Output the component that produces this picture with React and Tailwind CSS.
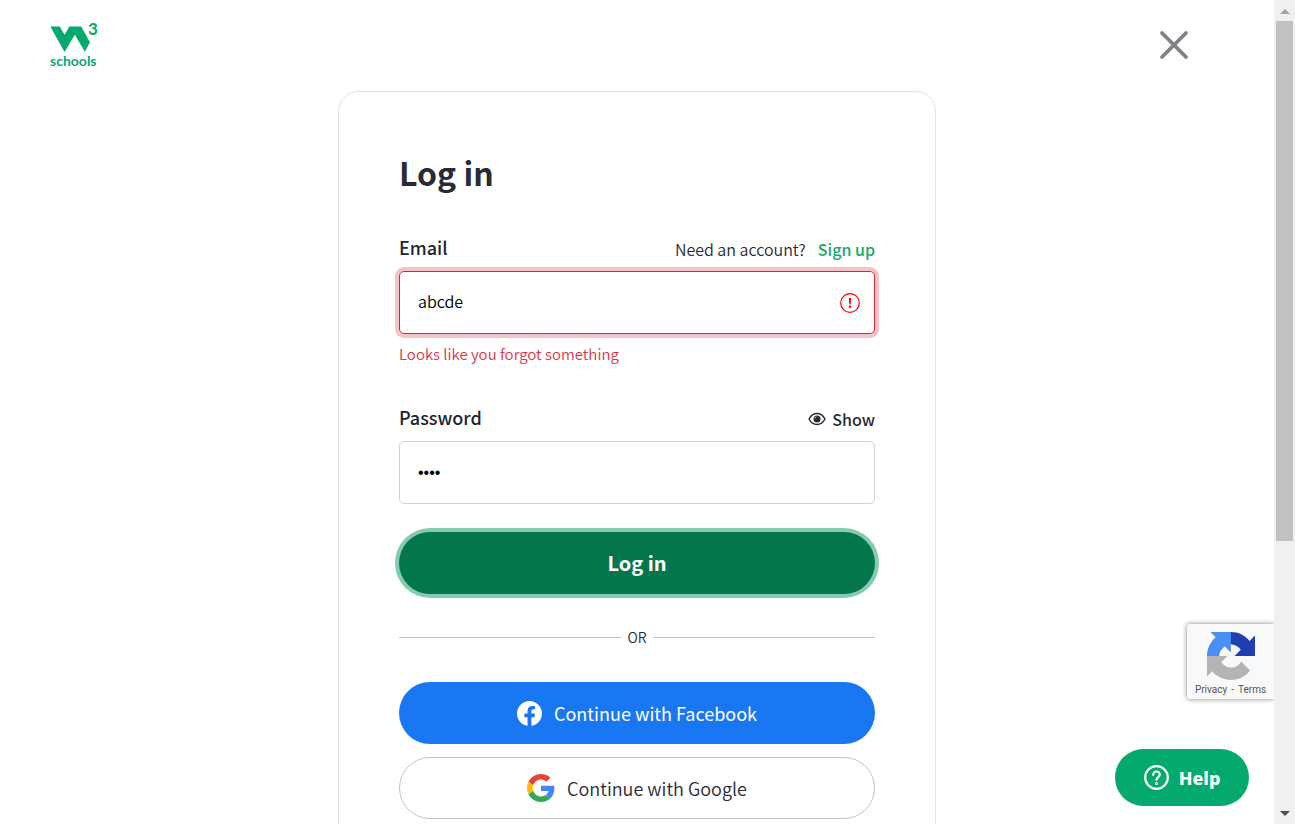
import { useState } from "react";

function Logo() {
  return (
    <a href="#home" aria-label="W3Schools home" className="block text-[#04aa6d]">
      <svg width="56" height="58" viewBox="0 -8 56 58" fill="currentColor" aria-hidden="true">
        <path d="M0.3 4.5H9.8L14.6 12.8L19.4 4.5H31.2L40 20.2L34.9 29.8L24.8 12.8L14.6 30Z" />
        <text x="38" y="13" fontFamily="Lato, sans-serif" fontWeight="700" fontSize="17">3</text>
        <text x="0" y="44" fontFamily="Lato, sans-serif" fontWeight="700" fontSize="14">schools</text>
      </svg>
    </a>
  );
}

function FieldHead({ id, label, children }) {
  return (
    <div className="mb-[9px] flex items-start justify-between">
      <label htmlFor={id} className="text-lg leading-[22px] font-medium text-[#21252f]">{label}</label>
      {children}
    </div>
  );
}

function EyeIcon() {
  return (
    <svg width="18" height="14" viewBox="0 0 18 14" fill="none" aria-hidden="true">
      <path d="M1 7C3 3.2 5.7 1.5 9 1.5S15 3.2 17 7C15 10.8 12.3 12.5 9 12.5S3 10.8 1 7Z" stroke="currentColor" strokeWidth="1.4" />
      <circle cx="9" cy="7" r="3.5" fill="currentColor" />
      <path d="M6.8 6.4A2 2 0 0 1 8.4 4.8" stroke="#fff" strokeWidth="0.8" />
    </svg>
  );
}

function FacebookIcon() {
  return (
    <svg width="25" height="25" viewBox="0 0 24 24" fill="#fff" aria-hidden="true">
      <path d="M24 12.073c0-6.627-5.373-12-12-12s-12 5.373-12 12c0 5.99 4.388 10.954 10.125 11.854v-8.385H7.078v-3.47h3.047V9.43c0-3.007 1.792-4.669 4.533-4.669 1.312 0 2.686.235 2.686.235v2.953H15.83c-1.491 0-1.956.925-1.956 1.874v2.25h3.328l-.532 3.47h-2.796v8.385C19.612 23.027 24 18.062 24 12.073z" />
    </svg>
  );
}

function GoogleIcon() {
  return (
    <svg width="28" height="28" viewBox="0 0 48 48" aria-hidden="true">
      <path fill="#EA4335" d="M24 9.5c3.54 0 6.71 1.22 9.21 3.6l6.85-6.85C35.9 2.38 30.47 0 24 0 14.62 0 6.51 5.38 2.56 13.22l7.98 6.19C12.43 13.72 17.74 9.5 24 9.5z" />
      <path fill="#4285F4" d="M46.98 24.55c0-1.57-.15-3.09-.38-4.55H24v9.02h12.94c-.58 2.96-2.26 5.48-4.78 7.18l7.73 6c4.51-4.18 7.09-10.36 7.09-17.65z" />
      <path fill="#FBBC05" d="M10.53 28.59c-.48-1.45-.76-2.99-.76-4.59s.27-3.14.76-4.59l-7.98-6.19C.92 16.46 0 20.12 0 24c0 3.88.92 7.54 2.56 10.78l7.97-6.19z" />
      <path fill="#34A853" d="M24 48c6.48 0 11.93-2.13 15.89-5.81l-7.73-6c-2.15 1.45-4.92 2.3-8.16 2.3-6.26 0-11.57-4.22-13.47-9.91l-7.98 6.19C6.51 42.62 14.62 48 24 48z" />
    </svg>
  );
}

function Captcha() {
  return (
    <div className="absolute right-0 bottom-[125px] flex w-[87px] flex-col items-center rounded-l-[3px] bg-[#f9f9f9] pt-2 shadow-[0_0_5px_gray]">
      <svg width="48" height="48" viewBox="0 0 64 64" aria-hidden="true">
        <path fill="#1f41b0" d="M64 31.955l-.033-1.37V4.687l-7.16 7.16C50.948 4.674 42.033.093 32.05.093c-10.4 0-19.622 4.96-25.458 12.64l11.736 11.86a15.55 15.55 0 0 1 4.754-5.334c2.05-1.6 4.952-2.906 8.968-2.906.485 0 .86.057 1.135.163 4.976.393 9.288 3.14 11.828 7.124l-8.307 8.307L64 31.953" />
        <path fill="#4a8ff5" d="M31.862.094l-1.37.033H4.594l7.16 7.16C4.58 13.147 0 22.06 0 32.046c0 10.4 4.96 19.622 12.64 25.458L24.5 45.768a15.55 15.55 0 0 1-5.334-4.754c-1.6-2.05-2.906-4.952-2.906-8.968 0-.485.057-.86.163-1.135.393-4.976 3.14-9.288 7.124-11.828l8.307 8.307L31.86.095" />
        <path fill="#b4b4b4" d="M.001 32.045l.033 1.37v25.898l7.16-7.16c5.86 7.173 14.774 11.754 24.76 11.754 10.4 0 19.622-4.96 25.458-12.64l-11.736-11.86a15.55 15.55 0 0 1-4.754 5.334c-2.05 1.6-4.952 2.906-8.968 2.906-.485 0-.86-.057-1.135-.163-4.976-.393-9.288-3.14-11.828-7.124l8.307-8.307L0 32.047" />
      </svg>
      <p className="flex gap-1 pt-px text-[10px] leading-[18px] text-[#555] font-[Roboto,sans-serif]">
        <a href="#privacy">Privacy</a>
        <span>-</span>
        <a href="#terms">Terms</a>
      </p>
    </div>
  );
}

function Scrollbar() {
  return (
    <div aria-hidden="true" className="flex w-[21px] shrink-0 flex-col items-center bg-[#f0f0f0]">
      <div className="flex h-[21px] items-center pt-[2px]">
        <svg width="10" height="5" viewBox="0 0 10 5"><path d="M5 0L10 5H0Z" fill="#a3a3a3" /></svg>
      </div>
      <div className="h-[520px] w-[17px] bg-[#c1c1c1]" />
      <div className="mt-auto flex h-[21px] items-center">
        <svg width="10" height="5" viewBox="0 0 10 5"><path d="M0 0H10L5 5Z" fill="#505050" /></svg>
      </div>
    </div>
  );
}

export default function App() {
  const [email, setEmail] = useState("abcde");
  const [password, setPassword] = useState("abcd");
  const [shown, setShown] = useState(false);

  return (
    <div className="flex h-screen overflow-hidden bg-white text-base text-[#282a35] font-['Noto_Sans_CJK_SC',sans-serif]">
      <div className="relative min-w-0 flex-1 overflow-hidden">
        <header className="flex h-[91px] items-start justify-between pt-[14px] pr-[85px] pl-[50px]">
          <Logo />
          <button type="button" aria-label="Close" className="mt-4 text-[#808086]">
            <svg width="30" height="30" viewBox="0 0 30 30" stroke="currentColor" strokeWidth="3.8" strokeLinecap="round" aria-hidden="true">
              <path d="M3 3L27 27M27 3L3 27" />
            </svg>
          </button>
        </header>

        <main className="mx-auto max-w-[598px] rounded-[20px] border border-[#e3e3e6] p-[60px]">
          <h1 className="text-[32px] leading-10 font-bold">Log in</h1>

          <form className="mt-11" noValidate onSubmit={(e) => e.preventDefault()}>
            <FieldHead id="email" label="Email">
              <p className="flex gap-3 leading-[26px] font-[350]">
                Need an account?
                <a href="#signup" className="font-medium text-[#18a76d]">Sign up</a>
              </p>
            </FieldHead>
            <div className="relative">
              <input
                id="email"
                type="email"
                value={email}
                onChange={(e) => setEmail(e.target.value)}
                aria-invalid="true"
                aria-describedby="email-error"
                className="block h-[63px] w-full rounded-[5px] border border-[#d92534] pr-12 pb-[3px] pl-[18px] text-base font-[350] text-black ring-4 ring-[#f6c3c8] outline-none"
              />
              <svg className="absolute top-[22px] right-[15px]" width="20" height="20" viewBox="0 0 20 20" aria-hidden="true">
                <circle cx="10" cy="10" r="9.3" fill="none" stroke="#ff0000" strokeWidth="1.2" />
                <path d="M8.9 5H11.1L10.7 11.5H9.3Z" fill="#ff0000" />
                <circle cx="10" cy="13.8" r="1.2" fill="#ff0000" />
              </svg>
            </div>
            <p id="email-error" className="mt-2 text-[15px] leading-6 font-[350] text-[#dc3545]">Looks like you forgot something</p>

            <div className="mt-10">
              <FieldHead id="password" label="Password">
                <button type="button" onClick={() => setShown(!shown)} className="flex items-center gap-[6px] leading-[26px] font-medium">
                  <EyeIcon />
                  Show
                </button>
              </FieldHead>
              <input
                id="password"
                type={shown ? "text" : "password"}
                value={password}
                onChange={(e) => setPassword(e.target.value)}
                className="block h-[63px] w-full rounded-[5px] border border-[#d0d0d9] px-[18px] text-base text-black outline-none font-['Liberation_Sans',sans-serif]"
              />
            </div>

            <button type="submit" className="mt-7 h-[62px] w-full rounded-full bg-[#04764e] text-xl font-bold text-white ring-4 ring-[#84cbb0]">
              Log in
            </button>
          </form>

          <div className="mt-[31px] mb-[33px] flex items-center gap-[6px] text-sm leading-6 font-[350]">
            <span className="h-px flex-1 bg-[#bfc3cb]" />
            OR
            <span className="h-px flex-1 bg-[#bfc3cb]" />
          </div>

          <div className="flex flex-col gap-[13px] text-lg">
            <button type="button" className="flex h-[62px] items-center justify-center gap-3 rounded-full bg-[#1977f3] text-white">
              <FacebookIcon />
              Continue with Facebook
            </button>
            <button type="button" className="flex h-[62px] items-center justify-center gap-3 rounded-full border border-[#bfc3cb] bg-white font-[350]">
              <GoogleIcon />
              Continue with Google
            </button>
          </div>
        </main>

        <Captcha />

        <button type="button" className="absolute right-[25px] bottom-[18px] flex h-[57px] w-[134px] items-center justify-center gap-[10px] rounded-full bg-[#04aa6d] text-lg font-extrabold text-white font-['Noto_Sans',sans-serif]">
          <svg width="25" height="25" viewBox="0 0 25 25" fill="none" stroke="currentColor" strokeWidth="2.2" strokeLinecap="round" strokeLinejoin="round" aria-hidden="true">
            <circle cx="12.5" cy="12.5" r="11.3" />
            <path d="M9.2 9.8A3.3 3.3 0 0 1 15.8 9.8C15.8 12 12.5 12.2 12.5 14.8" />
            <circle cx="12.5" cy="18.5" r="0.5" />
          </svg>
          Help
        </button>
      </div>
      <Scrollbar />
    </div>
  );
}
